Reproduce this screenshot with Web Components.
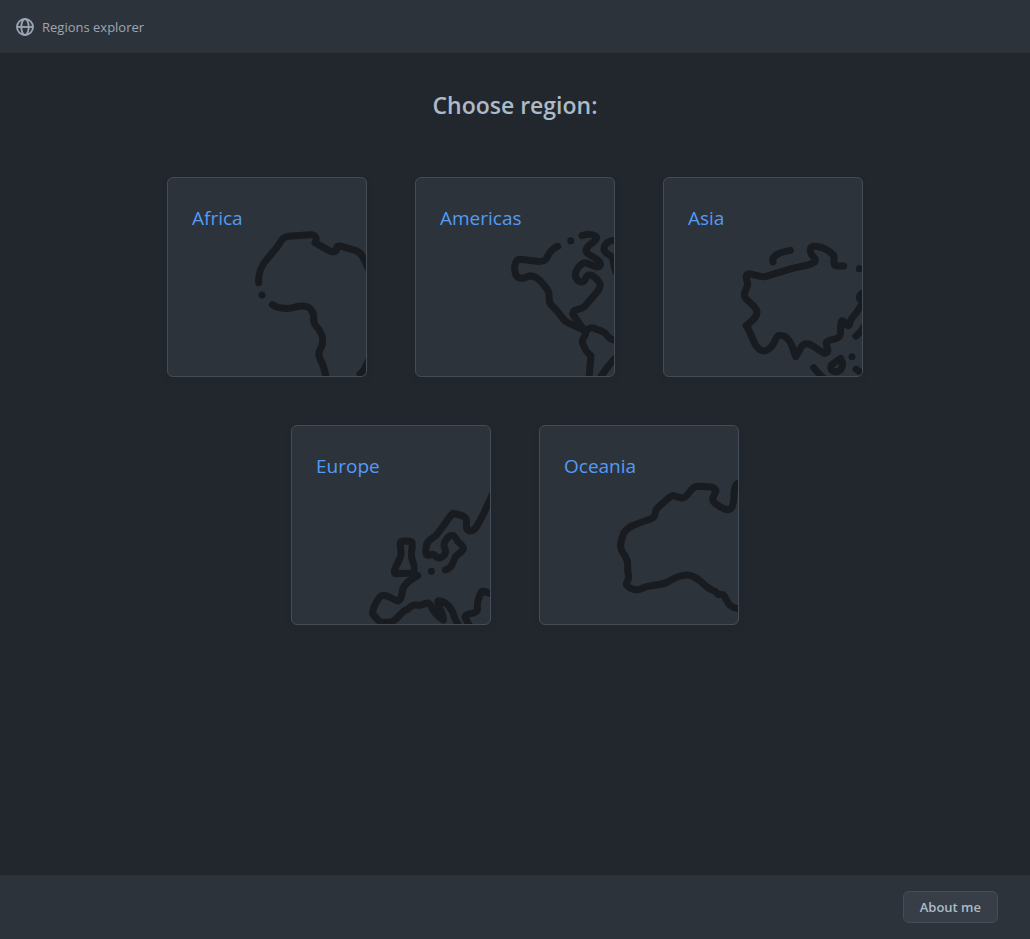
<!DOCTYPE html>
<html lang="en">
<head>
<meta charset="utf-8">
<meta name="viewport" content="width=device-width, initial-scale=1">
<title>Regions explorer</title>
<style>
  :root {
    --canvas: #22272e;
    --surface: #2d333b;
    --border: #444c56;
    --text: #adbac7;
    --accent: #539bf5;
    --ink: #181b1f;
  }
  body {
    margin: 0;
    background: var(--canvas);
    color: var(--text);
    font-family: "Segoe UI", "Open Sans", "Noto Sans", sans-serif;
    font-size: 13px;
    line-height: 20px;
  }
</style>
</head>
<body>
<regions-app>
  <app-header slot="header">Regions explorer</app-header>
  <region-list heading="Choose region:">
    <region-card name="Africa"><svg viewBox="18 18 594 594" aria-hidden="true">
      <path d="M290 332C288 300 298 280 318 258L345 226C356 212 358 196 380 193L445 188C460 187 467 200 459 212L500 235C512 242 524 242 523 230C523 221 532 221 541 224L582 236C602 243 610 268 620 292M300 369h.1M331 398C350 411 380 412 400 405C428 398 448 402 455 430C456 445 451 448 462 462C478 478 486 500 480 520C474 535 466 542 474 560C482 575 488 590 493 620M594 606C610 594 612 580 622 560"/></svg></region-card>
    <region-card name="Americas"><svg viewBox="18 18 594 594" aria-hidden="true">
      <path d="M443 223C425 230 416 245 410 258C405 268 392 269 380 268L330 262C316 262 310 285 317 307C322 320 335 320 346 317C362 305 380 316 392 328C400 338 414 350 417 366C418 385 416 395 427 402C446 418 455 440 470 450C490 461 510 468 527 478M482 206h.1M516 191C530 186 552 184 560 196C557 215 524 218 529 240C540 255 576 262 571 280C560 296 535 268 520 273C500 285 488 310 504 326C516 334 525 328 528 316C540 300 557 316 567 330C576 344 566 356 556 366L525 402C512 417 484 408 489 428L527 480M620 205C600 202 580 215 582 234C588 248 598 246 606 256C613 268 608 285 620 302M527 482C530 470 545 462 560 472C575 476 588 482 595 495C600 501 610 504 620 506M527 482C528 495 512 500 518 514C526 535 530 540 543 551L537 620M568 620C585 597 598 575 618 557"/></svg></region-card>
    <region-card name="Asia"><svg viewBox="18 18 594 594" aria-hidden="true">
      <path d="M345 270C338 248 372 240 397 235M557 282H540C520 282 532 265 527 250C515 238 495 225 474 223C455 220 452 236 464 252C481 267 470 272 450 279L400 290L322 314C305 316 288 306 272 306C260 309 265 320 269 335C268 350 254 362 261 376C270 390 286 394 296 415C302 435 279 448 264 461C279 480 282 503 294 521C312 543 325 540 340 524C354 509 352 494 362 491C382 487 394 502 402 522L413 554C425 538 427 521 440 516C460 512 476 533 500 544C520 540 502 524 505 511C515 498 538 506 545 492C552 480 543 458 552 446C562 445 570 474 575 454C577 436 598 425 604 408L622 388M604 290h.1M622 361C600 362 600 388 616 390M594 492C606 485 611 472 622 460M582 554h.1M467 587C480 602 490 614 500 622M594 592C603 598 609 603 620 605M548 559L520 579C514 601 535 603 548 593C558 580 553 568 548 559"/></svg></region-card>
    <region-card name="Europe"><svg viewBox="18 18 594 594" aria-hidden="true">
      <path d="M620 222C606 250 595 280 578 309C570 324 563 334 551 333C537 330 543 315 541 300C538 285 515 283 500 280C482 300 470 323 451 345C437 358 422 361 421 380C418 396 418 408 430 406C440 400 444 402 450 410C464 420 481 405 478 390C475 378 469 375 480 360C490 344 502 340 512 358C514 370 530 370 532 386C526 402 512 400 506 415C500 432 496 445 478 450M436 454h.1M344 366C352 362 368 362 377 366C384 382 370 396 379 420C384 434 390 453 379 459L328 461C316 453 345 418 345 402C346 388 340 380 344 366M395 467C375 480 351 492 349 514C348 528 342 540 336 543C320 541 308 522 287 527C276 535 258 566 260 582C270 592 276 604 287 607H315C335 600 345 574 363 569C378 558 376 553 401 556C418 554 424 543 432 553C440 570 455 592 472 600C475 580 450 555 456 543C480 540 500 568 506 594C510 604 515 610 520 620M620 522C604 521 598 511 587 514C580 528 571 548 575 566C572 588 540 574 537 592L552 620"/></svg></region-card>
    <region-card name="Oceania"><svg viewBox="18 18 594 594" aria-hidden="true">
      <path d="M622 188C590 190 606 230 596 255C590 282 563 264 543 250C528 235 542 227 546 212C543 198 520 200 490 199C465 202 464 235 444 234C420 230 422 222 405 233L370 264C359 276 368 286 356 294C325 308 284 314 269 340C264 355 254 376 264 394C288 424 279 440 282 460C290 474 279 480 277 493C285 507 306 513 320 507C350 492 370 500 401 486C420 474 438 464 461 465C493 467 510 500 534 510C554 516 546 525 557 524C574 520 570 530 580 545C587 560 598 563 620 568"/></svg></region-card>
  </region-list>
  <app-footer slot="footer"><action-button>About me</action-button></app-footer>
</regions-app>

<script>
  const define = (name, html, setup) => {
    const template = document.createElement("template");
    template.innerHTML = html;
    customElements.define(name, class extends HTMLElement {
      constructor() {
        super();
        this.attachShadow({ mode: "open" }).append(template.content.cloneNode(true));
      }
      connectedCallback() {
        if (setup) setup(this, this.shadowRoot);
      }
    });
  };

  define("regions-app", `
    <style>
      :host { display: flex; flex-direction: column; min-height: 100vh; }
      main { flex: 1; padding: 32px 24px; }
    </style>
    <slot name="header"></slot>
    <main><slot></slot></main>
    <slot name="footer"></slot>`);

  define("app-header", `
    <style>
      :host { display: block; background: var(--surface); }
      header { padding: 16px; }
      a { display: inline-flex; align-items: center; gap: 8px; height: 21px;
          color: #9ba7b4; text-decoration: none; vertical-align: top; }
      svg { width: 18px; height: 18px; fill: none; stroke: currentColor; stroke-width: 1.8; }
    </style>
    <header><a href="#">
      <svg viewBox="0 0 18 18" aria-hidden="true"><circle cx="9" cy="9" r="8"/><ellipse cx="9" cy="9" rx="3.7" ry="8"/><path d="M1 9h16"/></svg>
      <span><slot></slot></span>
    </a></header>`);

  define("region-list", `
    <style>
      :host { display: block; }
      h1 { margin: 0; padding: 4px 0 56px; font-size: 23px; line-height: 32px; font-weight: 600; text-align: center; }
      section { display: flex; flex-wrap: wrap; justify-content: center; gap: 48px; max-width: 744px; margin: 0 auto; }
    </style>
    <h1></h1>
    <section><slot></slot></section>`,
    (host, root) => { root.querySelector("h1").textContent = host.getAttribute("heading"); });

  define("region-card", `
    <style>
      :host { display: block; box-sizing: border-box; width: 200px; height: 200px;
              border: 1px solid var(--border); border-radius: 6px; overflow: hidden;
              background: var(--surface); box-shadow: 0 3px 6px #1c212833; }
      a { display: grid; height: 100%; color: var(--accent); text-decoration: none; }
      h2, slot { grid-area: 1 / 1; }
      h2 { margin: 0; padding: 24px; font-size: 19px; line-height: 32px; font-weight: 400; }
      ::slotted(svg) { grid-area: 1 / 1; width: 100%; height: 100%; fill: none; stroke: var(--ink);
                       stroke-width: 21; stroke-linecap: round; stroke-linejoin: round; }
    </style>
    <a href="#"><slot></slot><h2></h2></a>`,
    (host, root) => { root.querySelector("h2").textContent = host.getAttribute("name"); });

  define("app-footer", `
    <style>
      :host { display: block; background: var(--surface); }
      footer { display: flex; justify-content: flex-end; padding: 16px 32px; }
    </style>
    <footer><slot></slot></footer>`);

  define("action-button", `
    <style>
      :host { display: block; }
      button { display: block; box-sizing: border-box; height: 32px; padding: 0 16px;
               border: 1px solid var(--border); border-radius: 6px; background: #373e47;
               color: var(--text); font: inherit; font-weight: 600; cursor: pointer; }
    </style>
    <button type="button"><slot></slot></button>`);
</script>
</body>
</html>
